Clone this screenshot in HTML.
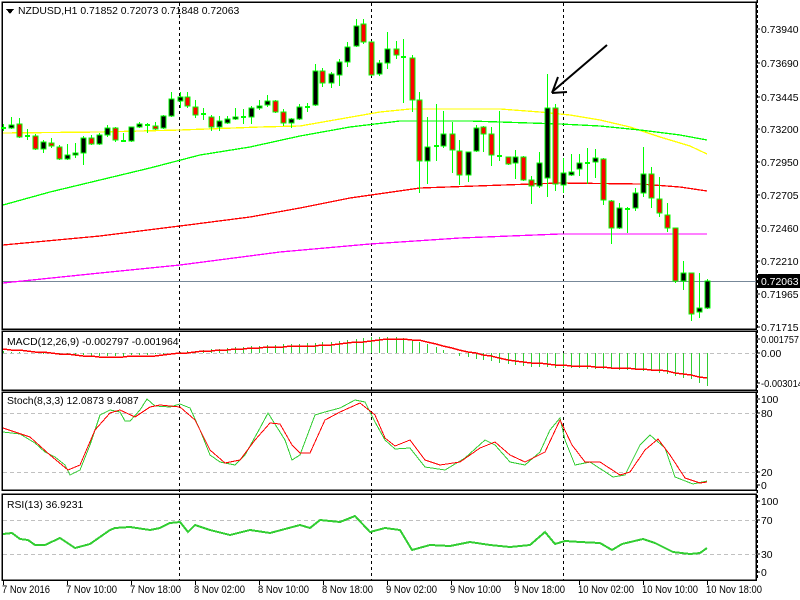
<!DOCTYPE html>
<html><head><meta charset="utf-8"><style>
html,body{margin:0;padding:0;background:#fff;width:800px;height:600px;overflow:hidden}
svg{display:block}
text{font-family:"Liberation Sans",sans-serif;font-size:10.4px;fill:#000}
text.t{font-size:11px}
</style></head><body>
<svg id="s" width="800" height="600" xmlns="http://www.w3.org/2000/svg" shape-rendering="crispEdges">
<rect width="800" height="600" fill="#fff"/>
<g fill="none" stroke="#000" stroke-width="1.5">
<rect x="2" y="2" width="754" height="327"/>
<rect x="2" y="331" width="754" height="59"/>
<rect x="2" y="392" width="754" height="98"/>
<rect x="2" y="494" width="754" height="86"/>
</g>
<line x1="757" y1="0" x2="757" y2="580" stroke="#000" stroke-width="1.5" stroke-dasharray="3,2"/>
<g stroke="#000" stroke-width="1" stroke-dasharray="3,3">
<line x1="179.5" y1="3" x2="179.5" y2="580"/>
<line x1="371.5" y1="3" x2="371.5" y2="580"/>
<line x1="563.5" y1="3" x2="563.5" y2="580"/>
</g>
<g stroke="#c0c0c0" stroke-width="1" stroke-dasharray="4,3">
<line x1="3" y1="353.5" x2="756" y2="353.5"/>
<line x1="3" y1="413.5" x2="756" y2="413.5"/>
<line x1="3" y1="472.5" x2="756" y2="472.5"/>
<line x1="3" y1="520.5" x2="756" y2="520.5"/>
<line x1="3" y1="554.5" x2="756" y2="554.5"/>
</g>
<line x1="3" y1="281.5" x2="756" y2="281.5" stroke="#778899" stroke-width="1"/>
<g fill="none" stroke-width="1.3">
<polyline stroke="#ffff00" points="3,133 100,132 180,130 260,127 300,126 340,119 380,112 410,109 500,109 540,112 570,115 600,120 630,127 660,137 690,146 707,154"/>
<polyline stroke="#00ff00" points="3,205 50,192 100,180 150,168 200,155 250,147 300,136 350,127 400,121 470,121 560,124 600,126 640,130 680,135 707,140"/>
<polyline stroke="#ff0000" points="3,245 100,236 180,226 250,217 300,208 350,198 420,188 560,183 640,184 680,187 707,191"/>
<polyline stroke="#ff00ff" points="3,283 100,273 180,265 280,252 370,244 460,238 560,234 707,234"/>
</g>
<g id="candles"></g>
<g id="macd"></g>
<g fill="none" stroke-width="1">
<polyline stroke="#32cd32" points="3,432 20,434 35,443 45,452 55,457 65,465 70,475 80,470 90,445 100,415 110,410 120,412 125,421 130,421 140,410 147,399 155,406 170,407 180,404 190,408 200,430 210,455 220,462 235,465 245,455 260,428 268,413 285,440 292,460 300,455 315,415 325,412 340,408 355,400 365,402 375,422 385,440 395,449 410,448 425,467 445,470 465,458 485,440 495,445 510,462 525,465 540,452 550,430 560,418 565,440 575,465 590,462 613,477 625,475 640,445 650,435 665,448 675,477 693,484 707,481"/>
<polyline stroke="#ff0000" points="3,428 30,437 50,455 68,470 80,465 95,430 110,413 120,410 135,417 150,407 160,405 180,407 195,420 210,450 225,463 240,460 255,440 270,423 280,424 292,445 300,453 310,453 325,420 340,412 360,403 375,415 385,438 395,446 410,440 425,460 440,465 460,462 480,448 495,442 510,455 525,462 545,452 560,420 572,445 585,462 600,462 620,475 630,472 645,450 658,439 670,455 685,478 700,483 707,482"/>
</g>
<polyline fill="none" stroke="#32cd32" stroke-width="2" points="3,534 12,533 20,539 28,540 35,545 45,545 60,538 75,548 90,544 110,530 115,528 130,527 150,530 160,528 170,523 180,522 188,532 195,525 210,530 230,535 250,530 270,533 300,525 310,528 320,520 340,522 355,516 370,532 385,528 400,530 412,550 430,545 450,546 470,542 490,545 510,547 530,545 545,532 555,544 565,541 580,542 600,543 612,550 622,544 643,539 655,543 673,552 690,554 700,553 707,548"/>
<g stroke="#000" stroke-width="2" fill="none" shape-rendering="auto">
<line x1="607" y1="45" x2="552" y2="92"/>
<line x1="552" y1="93" x2="558" y2="77"/>
<line x1="552" y1="93" x2="567" y2="92"/>
</g>
<path d="M6 9 L14 9 L10 14 Z" fill="#000"/>
<text x="18" y="14">NZDUSD,H1  0.71852 0.72073 0.71848 0.72063</text>
<text x="7" y="345">MACD(12,26,9) -0.002797 -0.001964</text>
<text x="7" y="404">Stoch(8,3,3) 12.0873 9.4087</text>
<text x="7" y="508">RSI(13) 36.9231</text>
<g id="ax"></g>
<rect x="758" y="274" width="42" height="14" fill="#000"/>
<text x="761" y="285" style="fill:#fff">0.72063</text>
</svg>
<script>
var C=[[3,'d',128,128,124,131],[11,'b',125,128,117,129],[19,'r',124,137,118,138],[27,'d',136,136,129,140],[35,'r',136,149,134,150],[43,'b',142,149,140,153],[51,'r',143,146,138,148],[59,'r',147,159,145,160],[67,'b',155,159,144,160],[75,'b',153,155,143,158],[83,'b',138,153,136,165],[91,'r',138,144,135,145],[99,'b',135,144,133,145],[107,'b',128,135,125,137],[115,'r',128,140,127,142],[123,'d',141,141,133,142],[131,'b',127,141,127,142],[139,'b',124,127,122,128],[147,'d',125,125,123,133],[155,'r',126,129,122,130],[163,'b',116,128,115,129],[171,'b',99,116,92,117],[180,'b',97,101,92,108],[187,'r',97,106,92,108],[195,'r',107,115,100,118],[203,'d',114,114,108,120],[211,'r',117,127,115,131],[219,'b',121,127,116,131],[227,'b',119,123,116,124],[235,'b',117,119,108,120],[243,'d',117,117,109,124],[251,'b',108,117,106,124],[259,'b',106,108,100,110],[267,'b',101,105,95,107],[275,'r',101,112,100,113],[283,'r',112,123,109,126],[291,'b',119,123,118,128],[299,'b',107,119,104,120],[307,'d',107,107,103,112],[315,'b',71,105,64,106],[322,'r',71,83,68,87],[331,'b',74,83,72,88],[339,'b',62,75,59,86],[347,'b',47,62,42,67],[356,'b',26,46,19,47],[363,'r',24,42,19,44],[371,'r',42,75,41,76],[379,'b',63,74,60,76],[387,'b',49,63,32,69],[396,'r',49,55,41,59],[403,'d',57,57,39,103],[412,'r',58,100,55,112],[419,'r',100,161,92,193],[427,'b',147,161,117,184],[436,'d',146,146,104,161],[443,'b',134,146,111,148],[452,'r',134,150,122,173],[459,'r',151,175,140,185],[468,'b',152,175,152,182],[476,'b',128,151,125,152],[483,'r',127,134,126,152],[491,'r',134,155,127,166],[499,'d',156,156,111,161],[508,'r',157,164,157,165],[515,'b',157,163,150,179],[523,'r',157,180,156,181],[531,'r',180,186,176,204],[539,'b',163,186,152,188],[547,'b',108,178,74,197],[555,'r',108,184,104,191],[563,'b',173,185,158,193],[571,'b',172,175,154,176],[579,'b',163,169,154,176],[587,'d',163,163,148,184],[595,'b',158,162,149,178],[603,'r',159,200,158,205],[611,'r',201,228,200,244],[619,'b',208,228,203,229],[627,'d',209,209,207,233],[635,'b',193,208,188,211],[643,'b',174,193,147,197],[651,'r',174,198,167,208],[659,'r',199,213,177,217],[667,'r',215,228,203,232],[675,'r',228,281,228,283],[683,'b',273,281,261,290],[691,'r',273,314,273,321],[699,'b',308,312,273,318],[707,'b',281,308,279,309]];
var h='';
C.forEach(function(c){var x=c[0];
h+='<line x1="'+(x+.5)+'" y1="'+c[4]+'" x2="'+(x+.5)+'" y2="'+c[5]+'" stroke="#00ff00" stroke-width="1"/>';
if(c[1]=='d'){h+='<rect x="'+(x-2)+'" y="'+(c[2]-1)+'" width="5" height="2" fill="#00ff00"/>';}
else{h+='<rect x="'+(x-2)+'" y="'+c[2]+'" width="5" height="'+Math.max(2,c[3]-c[2])+'" fill="'+(c[1]=='b'?'#000':'#f00')+'" stroke="#00ff00" stroke-width="1"/>';}
});
document.getElementById('candles').innerHTML=h;
function interp(p,x){for(var i=0;i<p.length-1;i++){if(x>=p[i][0]&&x<=p[i+1][0]){var t=(x-p[i][0])/(p[i+1][0]-p[i][0]);return p[i][1]+t*(p[i+1][1]-p[i][1]);}}return p[p.length-1][1];}
var H=[[3,351],[60,355],[120,356],[160,354],[180,352],[250,346],[330,342],[370,337],[400,337],[430,345],[460,356],[520,366],[560,368],[600,369],[650,371],[690,379],[707,386]];
var S=[[3,349],[100,357],[150,356],[180,353],[250,348],[330,345],[390,339],[420,340],[460,350],[520,362],[560,365],[600,367],[660,370],[707,378]];
var m='',pts=[];
C.forEach(function(c){var x=c[0],v=Math.round(interp(H,x));m+='<line x1="'+(x+.5)+'" y1="353" x2="'+(x+.5)+'" y2="'+v+'" stroke="#32cd32" stroke-width="1"/>';pts.push(x+','+Math.round(interp(S,x)));});
m+='<polyline fill="none" stroke="#f00" stroke-width="1.5" points="'+pts.join(' ')+'"/>';
document.getElementById('macd').innerHTML=m;
var A=[['0.73940',29],['0.73690',63],['0.73445',97],['0.73200',129],['0.72950',162],['0.72705',195],['0.72460',228],['0.72210',261],['0.71965',294],['0.71715',327],['0.001757',339,38],['0.00',353],['-0.003014',383,42],['100',399],['80',413],['20',472],['0',485],['100',501],['70',520],['30',554],['0',572]];
var a='';A.forEach(function(l){a+='<line x1="757" y1="'+l[1]+'" x2="760" y2="'+l[1]+'" stroke="#000"/><text x="761" y="'+(l[1]+4)+'"'+(l[2]?' textLength="'+l[2]+'" lengthAdjust="spacingAndGlyphs"':'')+'>'+l[0]+'</text>';});
var T=[['7 Nov 2016',3],['7 Nov 10:00',67],['7 Nov 18:00',131],['8 Nov 02:00',195],['8 Nov 10:00',259],['8 Nov 18:00',323],['9 Nov 02:00',387],['9 Nov 10:00',451],['9 Nov 18:00',515],['10 Nov 02:00',579],['10 Nov 10:00',643],['10 Nov 18:00',707]];
T.forEach(function(l){a+='<line x1="'+(l[1]+.5)+'" y1="580" x2="'+(l[1]+.5)+'" y2="585" stroke="#000"/><text class="t" x="'+(l[1]-1)+'" y="593" textLength="'+(l[0].length>11?56:(l[0].length>10?51:48))+'" lengthAdjust="spacingAndGlyphs">'+l[0]+'</text>';});
document.getElementById('ax').innerHTML=a;
</script>
</body></html>
